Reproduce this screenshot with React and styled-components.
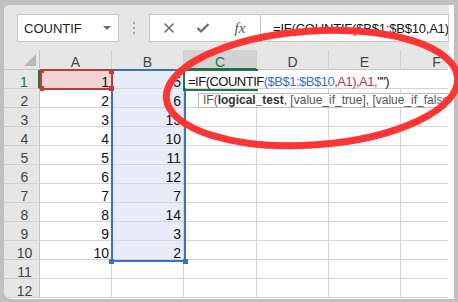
import styled, { createGlobalStyle } from 'styled-components';

const GlobalStyle = createGlobalStyle`
  html, body { margin: 0; padding: 0; background: #c0c0c0; }
  body { font-family: "Liberation Sans", Arial, sans-serif; }
  #root { position: relative; padding-top: 5px; }
`;

const Window = styled.div`
  margin: 0 4px;
  width: 450px;
  height: 294px;
  background: #fff;
  border-radius: 6px 0 0 8px;
  overflow: hidden;
  display: flex;
  flex-direction: column;
`;

const Toolbar = styled.div`
  height: 45px;
  margin-right: 5px;
  background: #e6e6e6;
  display: flex;
  align-items: flex-start;
  padding: 9px 0 0 13px;
  box-sizing: border-box;
`;

const NameBox = styled.div`
  width: 102px;
  height: 28px;
  box-sizing: border-box;
  border: 1px solid #c6c6c6;
  background: #fff;
  display: flex;
  align-items: center;
  justify-content: space-between;
  padding: 0 7px 0 6px;
  font-size: 13px;
  color: #222;
`;

const Caret = styled.span`
  width: 0;
  height: 0;
  border-left: 4px solid transparent;
  border-right: 4px solid transparent;
  border-top: 4px solid #6d6d6d;
`;

const Grip = styled.div`
  width: 30px;
  height: 28px;
  display: flex;
  flex-direction: column;
  align-items: center;
  justify-content: center;
  gap: 3px;
  span {
    width: 2px;
    height: 2px;
    background: #a8a8a8;
  }
`;

const FuncBox = styled.div`
  width: 112px;
  height: 28px;
  box-sizing: border-box;
  border: 1px solid #c6c6c6;
  background: #fff;
  display: flex;
  align-items: center;
  padding-left: 2px;
`;

const FuncButton = styled.div`
  width: ${p => p.$w || 34}px;
  height: 26px;
  display: flex;
  align-items: center;
  justify-content: center;
  color: #666;
`;

const Fx = styled.span`
  font-family: "Liberation Serif", "Times New Roman", serif;
  font-style: italic;
  font-size: 15px;
  color: #555;
`;

const FormulaInput = styled.div`
  flex: 1;
  height: 28px;
  box-sizing: border-box;
  border: 1px solid #c6c6c6;
  border-left: none;
  background: #fff;
  padding-left: 12px;
  font-size: 13px;
  letter-spacing: -0.2px;
  line-height: 27px;
  color: #111;
  white-space: nowrap;
  overflow: hidden;
`;

const Sheet = styled.div`
  position: relative;
  width: 444px;
  overflow: hidden;
  display: grid;
  grid-template-columns: 36px 72px 72px 73px 72px 72px 72px;
  grid-template-rows: 20px repeat(12, 19px);
  background: #fff;
`;

const Corner = styled.div`
  background: #e6e6e6;
  border-right: 1px solid #c4c4c4;
  border-bottom: 1px solid #c4c4c4;
  display: flex;
  align-items: flex-end;
  justify-content: flex-end;
  padding: 0 3px 3px 0;
`;

const ColHead = styled.div`
  background: ${p => (p.$active ? '#d2d2d2' : '#e6e6e6')};
  border-right: 1px solid #cfcfcf;
  border-bottom: ${p => (p.$active ? '2px solid #217346' : '1px solid #c4c4c4')};
  color: ${p => (p.$active ? '#217346' : '#444')};
  font-size: 14px;
  line-height: 20px;
  padding-top: 2px;
  box-sizing: border-box;
  text-align: center;
`;

const RowHead = styled.div`
  background: #e6e6e6;
  border-right: ${p => (p.$active ? '2px solid #217346' : '1px solid #c4c4c4')};
  border-bottom: 1px solid #cfcfcf;
  color: ${p => (p.$active ? '#217346' : '#444')};
  font-size: 14px;
  line-height: 19px;
  padding: 3px 0 0 6px;
  box-sizing: border-box;
  text-align: center;
`;

const Cell = styled.div`
  background: ${p => p.$bg || '#fff'};
  border-right: 1px solid #d4d4d4;
  border-bottom: 1px solid #d4d4d4;
  font-size: 14px;
  line-height: 19px;
  padding: 3px 2px 0 0;
  box-sizing: border-box;
  text-align: right;
  color: #111;
`;

const Range = styled.div`
  position: absolute;
  box-sizing: border-box;
  border: 2px solid ${p => p.$color};
  pointer-events: none;
`;

const Handle = styled.span`
  position: absolute;
  width: 5px;
  height: 5px;
  background: ${p => p.$color};
`;

const Editor = styled.div`
  position: absolute;
  left: 180px;
  top: 20px;
  width: 236px;
  height: 18px;
  background: #fff;
  font-size: 13px;
  letter-spacing: -0.5px;
  line-height: 19px;
  padding: 2px 0 0 4px;
  box-sizing: border-box;
  white-space: nowrap;
  color: #111;
`;

const ActiveCell = styled.div`
  position: absolute;
  left: 179px;
  top: 19px;
  width: 75px;
  height: 22px;
  box-sizing: border-box;
  border: 2px solid #217346;
  border-right: none;
  pointer-events: none;
`;

const Ref = styled.span`
  color: ${p => p.$color};
`;

const Tip = styled.div`
  position: absolute;
  left: 194px;
  top: 43px;
  height: 15px;
  box-sizing: border-box;
  border: 1px solid #bdbdbd;
  background: #fff;
  padding: 0 4px;
  font-size: 12px;
  line-height: 13px;
  color: #555;
  white-space: nowrap;
  b { color: #333; }
`;

const Mark = styled.svg`
  position: absolute;
  left: 0;
  top: 0;
  pointer-events: none;
`;

const cols = ['A', 'B', 'C', 'D', 'E', 'F'];
const colB = [5, 6, 15, 10, 11, 12, 7, 14, 3, 2];

export default function App() {
  const rows = Array.from({ length: 12 }, (_, i) => i + 1);
  return (
    <>
      <GlobalStyle />
      <Window>
        <Toolbar>
          <NameBox>
            COUNTIF
            <Caret />
          </NameBox>
          <Grip>
            <span />
            <span />
            <span />
          </Grip>
          <FuncBox>
            <FuncButton>
              <svg width="12" height="12" viewBox="0 0 12 12">
                <path d="M1.5 1.5 L10.5 10.5 M10.5 1.5 L1.5 10.5" stroke="#6a6a6a" strokeWidth="1.6" />
              </svg>
            </FuncButton>
            <FuncButton>
              <svg width="14" height="12" viewBox="0 0 14 12">
                <path d="M1.5 6 L5 9.5 L12.5 2" stroke="#6a6a6a" strokeWidth="2.2" fill="none" />
              </svg>
            </FuncButton>
            <FuncButton $w={40}>
              <Fx>fx</Fx>
            </FuncButton>
          </FuncBox>
          <FormulaInput>=IF(COUNTIF($B$1:$B$10,A1),A1,"")</FormulaInput>
        </Toolbar>
        <Sheet>
          <Corner>
            <svg width="12" height="12" viewBox="0 0 12 12">
              <polygon points="12,0 12,12 0,12" fill="#b8b8b8" />
            </svg>
          </Corner>
          {cols.map(c => (
            <ColHead key={c} $active={c === 'C'}>{c}</ColHead>
          ))}
          {rows.map(r => (
            <Row key={r} r={r} />
          ))}
          <Range $color="#3c6fc8" style={{ left: 107, top: 19, width: 75, height: 193 }}>
            <Handle $color="#3c6fc8" style={{ left: -4, bottom: -4 }} />
            <Handle $color="#3c6fc8" style={{ right: -4, bottom: -4 }} />
          </Range>
          <Range $color="#c4383d" style={{ left: 36, top: 19, width: 73, height: 21 }}>
            <Handle $color="#c4383d" style={{ left: -2, top: -2, width: 4, height: 4 }} />
            <Handle $color="#c4383d" style={{ right: -3, top: -2 }} />
            <Handle $color="#c4383d" style={{ right: -3, bottom: -3 }} />
            <Handle $color="#c4383d" style={{ left: -2, bottom: -3, width: 4 }} />
          </Range>
          <Editor>
            =IF(COUNTIF<Ref $color="#3d6fc9">($B$1:$B$10</Ref>
            <Ref $color="#b9353a">,A1),A1,</Ref>"")
          </Editor>
          <ActiveCell />
          <Tip>
            IF(<b>logical_test</b>, [value_if_true], [value_if_false])
          </Tip>
        </Sheet>
      </Window>
      <Mark width="458" height="302" viewBox="0 0 458 302">
        <g transform="translate(312 88) rotate(-4)">
          <ellipse cx="0" cy="0" rx="146" ry="57" fill="none" stroke="#ff3535" strokeWidth="7" />
        </g>
      </Mark>
    </>
  );
}

function Row({ r }) {
  const a = r <= 10 ? r : '';
  const b = r <= 10 ? colB[r - 1] : '';
  return (
    <>
      <RowHead $active={r === 1}>{r}</RowHead>
      <Cell $bg={r === 1 ? '#f3d4d5' : undefined}>{a}</Cell>
      <Cell $bg={r <= 10 ? '#e7edf8' : undefined}>{b}</Cell>
      <Cell />
      <Cell />
      <Cell />
      <Cell />
    </>
  );
}
